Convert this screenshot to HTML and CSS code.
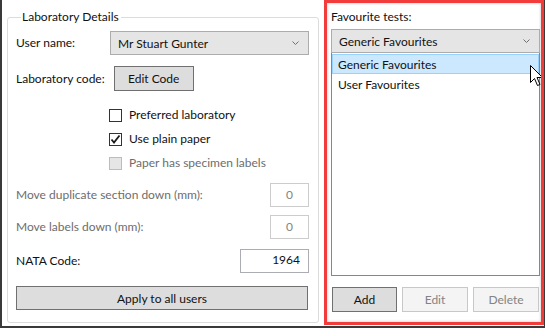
FILE: index.html
```html
<!DOCTYPE html>
<html lang="en">
<head>
  <meta charset="UTF-8" />
  <title>Laboratory Details</title>
  <link rel="stylesheet" href="styles.css">
</head>
<body>
  <div class="window">

    <div class="left">
      <fieldset class="group">
        <legend>Laboratory Details</legend>

        <div class="row row-user">
          <span class="label">User name:</span>
          <div class="combo combo-user">
            <span>Mr Stuart Gunter</span>
            <svg class="chev" width="7" height="4" viewBox="0 0 7 4"><path d="M0.5 0.5 L3.5 3.5 L6.5 0.5" fill="none" stroke="#707070" stroke-width="1"/></svg>
          </div>
        </div>

        <div class="row row-code">
          <span class="label">Laboratory code:</span>
          <button class="btn btn-code">Edit Code</button>
        </div>

        <div class="checks">
          <label class="check">
            <span class="box"></span>
            <span>Preferred laboratory</span>
          </label>
          <label class="check">
            <span class="box">
              <svg width="11" height="11" viewBox="0 0 11 11"><path d="M1.5 5.5 L4 8.5 L9.5 1.5" fill="none" stroke="#1a1a1a" stroke-width="1.8"/></svg>
            </span>
            <span>Use plain paper</span>
          </label>
          <label class="check disabled">
            <span class="box"></span>
            <span>Paper has specimen labels</span>
          </label>
        </div>

        <div class="row row-dup disabled">
          <span class="label">Move duplicate section down (mm):</span>
          <div class="textbox small">0</div>
        </div>

        <div class="row row-move disabled">
          <span class="label">Move labels down (mm):</span>
          <div class="textbox small">0</div>
        </div>

        <div class="row row-nata">
          <span class="label">NATA Code:</span>
          <div class="textbox wide">1964</div>
        </div>

        <button class="btn btn-apply">Apply to all users</button>
      </fieldset>
    </div>

    <div class="right">
      <div class="fav-label">Favourite tests:</div>
      <div class="combo combo-fav">
        <span>Generic Favourites</span>
        <svg class="chev" width="7" height="4" viewBox="0 0 7 4"><path d="M0.5 0.5 L3.5 3.5 L6.5 0.5" fill="none" stroke="#707070" stroke-width="1"/></svg>
      </div>
      <div class="listbox">
        <div class="popup">
          <div class="item selected">Generic Favourites</div>
          <div class="item">User Favourites</div>
        </div>
      </div>
      <div class="actions">
        <button class="btn">Add</button>
        <button class="btn off">Edit</button>
        <button class="btn off">Delete</button>
      </div>

      <svg class="cursor" width="14" height="23" viewBox="0 0 14 23">
        <path d="M0.5 0.5 L0.5 17.5 L4.5 13.5 L7.5 20.5 L10 19.5 L7 12.5 L12.5 12.5 Z" fill="#fff" stroke="#000" stroke-width="1"/>
      </svg>
    </div>

  </div>
</body>
</html>
```

FILE: styles.css
```css
* {
  box-sizing: border-box;
}

body {
  margin: 0;
  background: #fff;
  font-family: 'Lato', 'Noto Sans', sans-serif;
  font-size: 12px;
  color: #111;
}

.window {
  width: 545px;
  height: 328px;
  display: flex;
  border-left: 2px solid #3a3a3a;
  border-right: 1px solid #3a3a3a;
  border-bottom: 2px solid #3a3a3a;
  background: #fff;
}

.left {
  width: 322px;
  padding-left: 5px;
}

.group {
  width: 312px;
  height: 314px;
  margin: 9px 0 0 0;
  padding: 0 9px 0 8px;
  border: 1px solid #dcdcdc;
  border-radius: 3px;
}

.group legend {
  margin-left: 5px;
  padding: 0 2px 0 1px;
  line-height: 16px;
  color: #111;
}

.row {
  display: flex;
  align-items: center;
  justify-content: space-between;
}

.label {
  line-height: 16px;
}

.disabled .label,
.check.disabled {
  color: #6d6d6d;
}

.row-user {
  margin-top: 6px;
}

.row-code {
  margin-top: 11px;
  justify-content: flex-start;
  gap: 9px;
}

.combo {
  height: 24px;
  background: #e5e5e5;
  border: 1px solid #acacac;
  display: flex;
  align-items: center;
  justify-content: space-between;
  padding: 0 9px 0 7px;
}

.combo-user {
  width: 199px;
}

.btn {
  font: inherit;
  color: #111;
  background: #dddddd;
  border: 1px solid #707070;
  height: 25px;
  padding: 0;
}

.btn-code {
  width: 80px;
}

.btn.off {
  background: #f4f4f4;
  border-color: #c8c8c8;
  color: #838383;
}

.checks {
  margin-top: 16px;
  padding-left: 93px;
  display: flex;
  flex-direction: column;
  gap: 8px;
}

.check {
  display: flex;
  align-items: center;
  gap: 7px;
  height: 16px;
  line-height: 16px;
}

.box {
  width: 13px;
  height: 13px;
  border: 1px solid #333;
  background: #fff;
  display: flex;
  align-items: center;
  justify-content: center;
}

.check.disabled .box {
  background: #e6e6e6;
  border-color: #bcbcbc;
}

.row-dup {
  margin-top: 12px;
}

.row-move {
  margin-top: 8px;
}

.row-nata {
  margin-top: 10px;
}

.textbox {
  height: 24px;
  border: 1px solid #abadb3;
  background: #fff;
  line-height: 22px;
  text-align: center;
}

.textbox.small {
  width: 39px;
}

.disabled .textbox {
  border-color: #cccccc;
  color: #838383;
}

.textbox.wide {
  width: 69px;
  text-align: right;
  padding-right: 8px;
  line-height: 20px;
}

.btn-apply {
  display: block;
  width: 292px;
  height: 24px;
  margin-top: 13px;
}

.right {
  position: relative;
  width: 220px;
  height: 325px;
  border: 3px solid #f23b3b;
  box-shadow: inset 0 0 3px rgb(0 0 0 / 0.25);
  padding: 6px 1px 0 4px;
  overflow: hidden;
}

.fav-label {
  line-height: 16px;
}

.combo-fav {
  margin-top: 4px;
  width: 209px;
}

.listbox {
  position: relative;
  width: 209px;
  height: 223px;
  border: 1px solid #828790;
  border-top: none;
  background: #fff;
}

.popup {
  position: absolute;
  left: 0;
  top: 0;
  width: 207px;
  padding-top: 1px;
}

.item {
  height: 20px;
  line-height: 19px;
  padding-left: 5px;
  border: 1px solid transparent;
}

.item.selected {
  background: #cce8ff;
  border-color: #99d1ff;
}

.actions {
  margin-top: 11px;
  padding-left: 1px;
  display: grid;
  grid-template-columns: 65px 66px 66px;
  gap: 5px;
}

.cursor {
  position: absolute;
  left: 203px;
  top: 62px;
}
```
